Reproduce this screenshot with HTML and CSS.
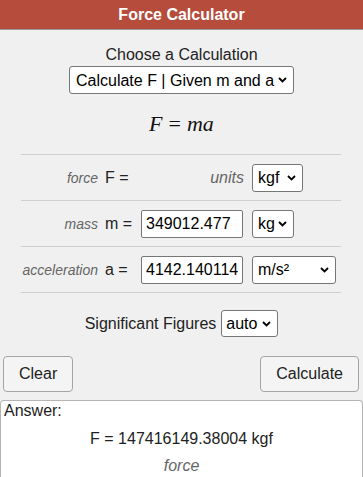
FILE: index.html
```html
<!DOCTYPE html>
<html lang="en">
<head>
    <meta charset="UTF-8">
    <meta name="viewport" content="width=device-width, initial-scale=1.0">
    <title>Force Calculator</title>
    <link rel="stylesheet" href="styles.css">
</head>
<body>
    <div class="calc-title">Force Calculator</div>

    <div class="choose">
        <div class="choose-label">Choose a Calculation</div>
        <select class="sel sel-calc">
            <option>Calculate F | Given m and a</option>
            <option>Calculate m | Given F and a</option>
            <option>Calculate a | Given F and m</option>
        </select>
    </div>

    <div class="formula"><i>F</i><span class="eq">=</span><i>ma</i></div>

    <div class="calc-table">
        <div class="calc-row">
            <div class="var-name">force</div>
            <div class="var-sym">F =</div>
            <div class="var-units">units</div>
            <div><select class="sel sel-kgf"><option>kgf</option></select></div>
        </div>
        <div class="calc-row">
            <div class="var-name">mass</div>
            <div class="var-sym">m =</div>
            <div><input type="text" class="calc-input" value="349012.477"></div>
            <div><select class="sel sel-kg"><option>kg</option></select></div>
        </div>
        <div class="calc-row">
            <div class="var-name">acceleration</div>
            <div class="var-sym">a =</div>
            <div><input type="text" class="calc-input" value="4142.1401141148"></div>
            <div><select class="sel sel-ms"><option>m/s²</option></select></div>
        </div>
    </div>

    <div class="sigfig">
        <span>Significant Figures</span>
        <select class="sel sel-auto"><option>auto</option></select>
    </div>

    <div class="calc-buttons">
        <button class="btn">Clear</button>
        <button class="btn">Calculate</button>
    </div>

    <div class="answer">
        <div class="answer-label">Answer:</div>
        <div class="answer-value">F = 147416149.38004 kgf</div>
        <div class="answer-name">force</div>
    </div>
</body>
</html>
```

FILE: styles.css
```css
body {
    margin: 0;
    background-color: #f0f0f0;
    font-family: "Liberation Sans", Arial, sans-serif;
    font-size: 16px;
    color: #222;
    line-height: 18px;
}

.calc-title {
    height: 29px;
    line-height: 29px;
    background-color: #b54c3c;
    color: #fff;
    font-weight: bold;
    text-align: center;
    border-bottom: 1px solid #9a9a9a;
}

.choose {
    text-align: center;
    padding-top: 16px;
}

.choose-label {
    margin-bottom: 2px;
}

.sel {
    appearance: none;
    -webkit-appearance: none;
    box-sizing: border-box;
    height: 28px;
    border: 1px solid #767676;
    border-radius: 3px;
    background: #fff url("data:image/svg+xml,%3Csvg xmlns='http://www.w3.org/2000/svg' width='9' height='6' viewBox='0 0 9 6'%3E%3Cpath d='M1 1l3.5 3.5L8 1' fill='none' stroke='%23000' stroke-width='1.8'/%3E%3C/svg%3E") no-repeat right 6px center;
    font-family: "Liberation Sans", Arial, sans-serif;
    font-size: 16px;
    color: #000;
    padding: 0 18px 0 5px;
    margin: 0;
    vertical-align: middle;
}

.sel-calc {
    width: 225px;
    padding-left: 6px;
}

.sel-kgf { width: 51px; }
.sel-kg { width: 42px; }
.sel-ms { width: 84px; }
.sel-auto { width: 57px; padding-left: 4px; }

.formula {
    margin-top: 15px;
    height: 30px;
    line-height: 30px;
    text-align: center;
    font-family: "Liberation Serif", "Times New Roman", serif;
    font-size: 22px;
    color: #111;
}

.formula .eq {
    margin: 0 6px;
}

.calc-table {
    width: 320px;
    margin: 15px 0 0 21px;
    border-bottom: 1px solid #cfcfcf;
}

.calc-row {
    display: grid;
    grid-template-columns: 84px 36px 111px 1fr;
    align-items: center;
    height: 45px;
    border-top: 1px solid #cfcfcf;
}

.var-name {
    text-align: right;
    padding-right: 7px;
    font-style: italic;
    font-size: 14px;
    color: #666;
}

.var-units {
    text-align: right;
    padding-right: 8px;
    font-style: italic;
    color: #666;
}

.calc-input {
    box-sizing: border-box;
    width: 102px;
    height: 28px;
    border: 1px solid #767676;
    border-radius: 2px;
    padding: 0 4px;
    font-family: "Liberation Sans", Arial, sans-serif;
    font-size: 16px;
    color: #000;
    background: #fff;
}

.sigfig {
    display: flex;
    justify-content: center;
    align-items: center;
    gap: 5px;
    margin-top: 17px;
}

.sigfig .sel {
    height: 27px;
}

.calc-buttons {
    display: flex;
    justify-content: space-between;
    padding: 0 4px 0 3px;
    margin-top: 19px;
}

.btn {
    height: 36px;
    padding: 0 15px;
    border: 1px solid #a5a5a5;
    border-radius: 4px;
    background-color: #f4f4f4;
    font-family: "Liberation Sans", Arial, sans-serif;
    font-size: 16px;
    color: #222;
}

.answer {
    margin-top: 8px;
    height: 76px;
    background-color: #fff;
    border: 1px solid #b5b5b5;
    border-bottom: none;
    border-radius: 4px 4px 0 0;
    padding: 1px 3px 0;
}

.answer-value {
    text-align: center;
    margin-top: 10px;
}

.answer-name {
    text-align: center;
    margin-top: 9px;
    font-style: italic;
    color: #666;
}
```
